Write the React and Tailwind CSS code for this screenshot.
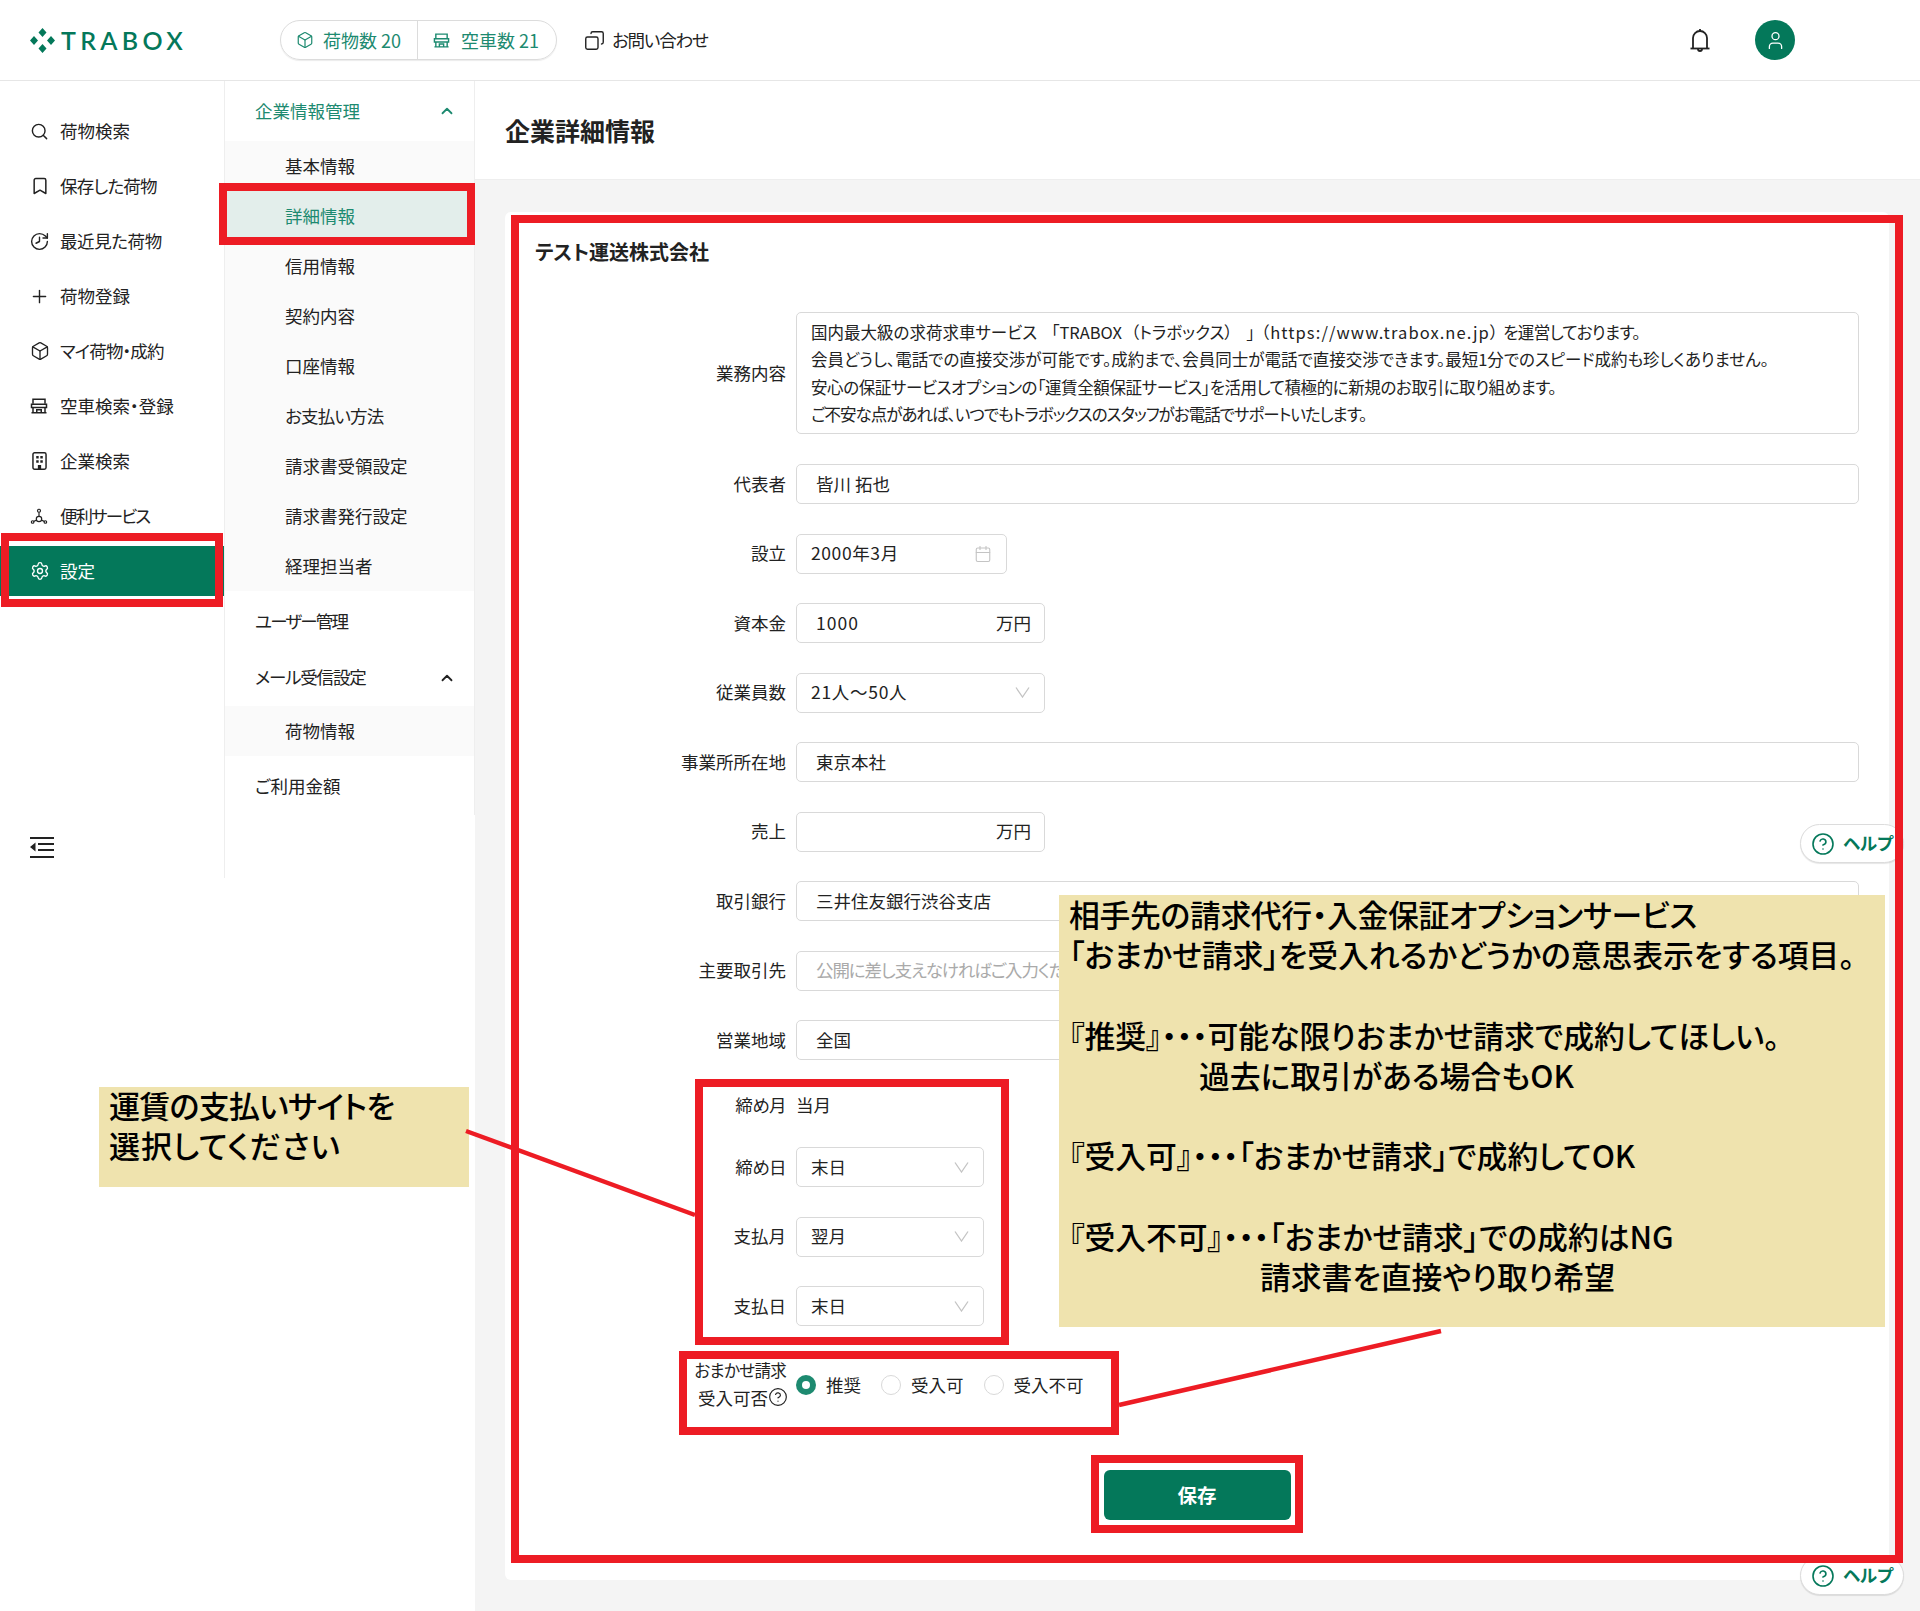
import { Bookmark, Box, Calendar, ChevronUp, CircleHelp, Copy, History, Plus, Search, Settings, User } from 'lucide-react';

const StoreIcon = ({ className }) => (
    <svg viewBox="0 0 24 24" fill="none" stroke="currentColor" strokeWidth="2" className={className}>
        <path d="M4 9V3h16v6" />
        <path d="M2 9.500h20v4.500H2z" />
        <path d="M4 14v7M20 14v7M2 21h20" />
        <path d="M9 21v-4h6v4" />
    </svg>
);

const BuildingIcon = ({ className }) => (
    <svg viewBox="0 0 18 22" fill="none" className={className}>
        <rect x="1" y="1" width="16" height="20" rx="2" stroke="currentColor" strokeWidth="1.8" />
        <path fill="currentColor" d="M5 5h3v3H5zM10 5h3v3h-3zM5 10h3v3H5zM10 10h3v3h-3zM7 16h4v5H7z" />
    </svg>
);

const NetworkIcon = ({ className }) => (
    <svg viewBox="0 0 24 24" fill="none" stroke="currentColor" strokeWidth="1.6" className={className}>
        <circle cx="12" cy="5" r="2" />
        <circle cx="3.500" cy="20" r="1.700" />
        <circle cx="20.500" cy="20" r="1.700" />
        <circle cx="12" cy="16" r="3.600" />
        <path d="M12 7v5.400M5 19.200l4-1.800M19 19.200l-4-1.800" />
    </svg>
);

const BellIcon = ({ className }) => (
    <svg viewBox="0 0 20 25" fill="none" stroke="currentColor" strokeWidth="1.8" className={className}>
        <path d="M3 20V10a7 7 0 0 1 14 0v10" />
        <path d="M0.500 20.500h19" />
        <path d="M8 21a2 2 0 0 0 4 0" />
        <path d="M10 3V1" />
    </svg>
);

const SelectArrow = () => (
    <svg viewBox="0 0 14 11" fill="none" stroke="#c4c4c4" strokeWidth="1.3" className="w-[15px] h-[11px]">
        <path d="M0.500 0.500 7 10 13.500 0.500" />
    </svg>
);

const Logo = () => (
    <div className="flex items-center gap-[6px]">
        <svg viewBox="0 0 25 25" className="w-[25px] h-[25px]" fill="#04785a">
            <path d="M12.500 0l4 4.500-4 4.500-4-4.500zM12.500 16l4 4.500-4 4.500-4-4.500zM4 8l4 4.500-4 4.500-4-4.500zM21 8l4 4.500-4 4.500-4-4.500z" />
        </svg>
        <span className="font-['Lato',sans-serif] text-[25px] leading-none font-semibold tracking-[4.300px] text-[#04785a]">TRABOX</span>
    </div>
);

const navItems = [
    { label: '荷物検索', icon: <Search className="w-[19px] h-[19px]" strokeWidth={1.8} /> },
    { label: '保存した荷物', tracking: 'tracking-[-0.8px]', icon: <Bookmark className="w-[20px] h-[20px]" strokeWidth={1.8} /> },
    { label: '最近見た荷物', tracking: 'tracking-[-0.4px]', icon: <History className="w-[21px] h-[21px] -ml-[1px] -scale-x-100" strokeWidth={1.6} /> },
    { label: '荷物登録', icon: <Plus className="w-[21px] h-[21px] -ml-[1px]" strokeWidth={1.6} /> },
    { label: 'マイ荷物・成約', tracking: 'tracking-[-0.9px]', icon: <Box className="w-[20px] h-[20px]" strokeWidth={1.6} /> },
    { label: '空車検索・登録', icon: <StoreIcon className="w-[18px] h-[18px]" /> },
    { label: '企業検索', icon: <BuildingIcon className="w-[15px] h-[18px] ml-[2px]" /> },
    { label: '便利サービス', tracking: 'tracking-[-1.9px]', icon: <NetworkIcon className="w-[18px] h-[18px]" /> },
    { label: '設定', icon: <Settings className="w-[20px] h-[20px]" strokeWidth={1.6} />, active: true },
];

const settingItems = [
    { label: '基本情報' },
    { label: '詳細情報', active: true },
    { label: '信用情報' },
    { label: '契約内容' },
    { label: '口座情報' },
    { label: 'お支払い方法', tracking: 'tracking-[-0.8px]' },
    { label: '請求書受領設定' },
    { label: '請求書発行設定' },
    { label: '経理担当者' },
];

const Header = () => (
    <header className="h-[81px] border-b border-[#e6e6e6] flex items-center pl-[30px]">
        <div className="w-[250px]">
            <Logo />
        </div>
        <div className="w-[277px] h-[40px] flex items-center border border-[#dcdcdc] rounded-full shadow-[0_1px_1px_rgba(0,0,0,0.08)] text-[#1d8a70] text-[18px]">
            <div className="w-[137px] h-full flex items-center pl-[15px] gap-[9px] border-r border-[#dcdcdc]">
                <Box className="w-[18px] h-[18px]" strokeWidth={1.6} />
                <span>荷物数 20</span>
            </div>
            <div className="flex items-center pl-[15px] gap-[11px]">
                <StoreIcon className="w-[17px] h-[17px]" />
                <span>空車数 21</span>
            </div>
        </div>
        <div className="flex items-center ml-[27px] gap-[7px]">
            <Copy className="w-[21px] h-[21px] -scale-x-100" strokeWidth={1.6} />
            <span className="tracking-[-1.2px]">お問い合わせ</span>
        </div>
        <div className="ml-auto mr-[125px] flex items-center gap-[45px]">
            <BellIcon className="w-[20px] h-[25px] text-[#222]" />
            <div className="w-[40px] h-[40px] rounded-full bg-[#04785a] flex items-center justify-center">
                <User className="w-[21px] h-[21px] text-white" strokeWidth={1.5} />
            </div>
        </div>
    </header>
);

const MainNav = () => (
    <nav className="w-[225px] h-[797px] border-r border-[#eeeeee] pt-[25px] flex flex-col">
        {navItems.map((item) => (
            <div
                key={item.label}
                className={`h-[50px] mb-[5px] flex items-center pl-[30px] ${item.active ? 'bg-[#04785a] text-white' : ''}`}
            >
                <span className="w-[30px] flex items-center">{item.icon}</span>
                <span className={item.tracking}>{item.label}</span>
            </div>
        ))}
        <svg viewBox="0 0 24 21" className="w-[24px] h-[21px] mt-auto mb-[20px] ml-[30px]" fill="#222">
            <path d="M0 0h24v2H0zM8 6h16v2H8zM8 12h16v2H8zM0 19h24v2H0zM5.500 5.500v9L0 10z" />
        </svg>
    </nav>
);

const SettingsNav = () => (
    <aside className="w-[250px] h-[734px] border-r border-[#eeeeee]">
        <div className="h-[60px] flex items-center justify-between pl-[30px] pr-[18px] text-[#1d8a70]">
            <span>企業情報管理</span>
            <ChevronUp className="w-[18px] h-[18px]" strokeWidth={2.4} />
        </div>
        <div className="bg-[#fafafa]">
            {settingItems.map((item) => (
                <div
                    key={item.label}
                    className={`h-[50px] flex items-center pl-[60px] ${item.active ? 'bg-[#e3eeeb] text-[#1d8a70]' : ''}`}
                >
                    <span className={item.tracking}>{item.label}</span>
                </div>
            ))}
        </div>
        <div className="h-[60px] flex items-center pl-[30px]">
            <span className="tracking-[-1.8px]">ユーザー管理</span>
        </div>
        <div className="h-[55px] pb-[2px] flex items-center justify-between pl-[30px] pr-[18px]">
            <span className="tracking-[-1.2px]">メール受信設定</span>
            <ChevronUp className="w-[18px] h-[18px]" strokeWidth={2.4} />
        </div>
        <div className="h-[50px] flex items-center pl-[60px] bg-[#fafafa]">荷物情報</div>
        <div className="h-[60px] flex items-center pl-[30px]">ご利用金額</div>
    </aside>
);

const Row = ({ label, labelClass, children }) => (
    <div className="flex items-center gap-[10px]">
        <div className={`w-[251px] text-right shrink-0 ${labelClass || ''}`}>{label}</div>
        {children}
    </div>
);

const Field = ({ className = '', children }) => (
    <div className={`h-[40px] border border-[#d9d9d9] rounded-[5px] flex items-center justify-between ${className}`}>
        {children}
    </div>
);

const Select = ({ value, width = 'w-[188px]', valueClass }) => (
    <Field className={`${width} pl-[14px] pr-[14px]`}>
        <span className={valueClass}>{value}</span>
        <SelectArrow />
    </Field>
);

const Radio = ({ label, checked, className }) => (
    <div className={`flex items-center gap-[10px] ${className}`}>
        {checked ? (
            <span className="w-[20px] h-[20px] rounded-full bg-[#1d8a70] flex items-center justify-center">
                <span className="w-[8px] h-[8px] rounded-full bg-white"></span>
            </span>
        ) : (
            <span className="w-[20px] h-[20px] rounded-full border border-[#d9d9d9]"></span>
        )}
        <span>{label}</span>
    </div>
);

const DetailForm = () => (
    <section className="mt-[32px] ml-[30px] mr-[31px] h-[1368px] bg-white rounded-[6px] pt-[26px] px-[30px]">
        <h2 className="text-[20px] leading-[28px] font-bold mb-[46px]">テスト運送株式会社</h2>
        <div className="flex flex-col gap-[30px]">
            <Row label="業務内容">
                <div className="flex-1 h-[122px] border border-[#d9d9d9] rounded-[5px] px-[14px] py-[6px] leading-[27.4px] text-[16.5px] whitespace-nowrap">
                    <p>
                        <span>国内最大級の求荷求車サービス</span>
                        <span className="ml-[14px]">「TRABOX</span>
                        <span className="ml-[9px]">（トラボックス）</span>
                        <span className="ml-[14px]">」</span>
                        <span className="ml-[6px] tracking-[1.1px]">（https://www.trabox.ne.jp）</span>
                        <span className="ml-[4px] tracking-[-0.6px]">を運営しております。</span>
                    </p>
                    <p>会員どうし、電話での直接交渉が可能です。成約まで、会員同士が電話で直接交渉できます。最短1分でのスピード成約も珍しくありません。</p>
                    <p className="tracking-[-0.4px]">安心の保証サービスオプションの「運賃全額保証サービス」を活用して積極的に新規のお取引に取り組めます。</p>
                    <p className="tracking-[-1px]">ご不安な点があれば、いつでもトラボックスのスタッフがお電話でサポートいたします。</p>
                </div>
            </Row>
            <div className="flex flex-col gap-[29.5px]">
                <Row label="代表者">
                    <Field className="flex-1 pl-[19px]">皆川 拓也</Field>
                </Row>
                <Row label="設立">
                    <Field className="w-[211px] pl-[14px] pr-[14px]">
                        <span className="tracking-[0.6px]">2000年3月</span>
                        <Calendar className="w-[18px] h-[18px] text-[#c4c4c4]" strokeWidth={1.5} />
                    </Field>
                </Row>
                <Row label="資本金">
                    <Field className="w-[249px] pl-[19px] pr-[13px]">
                        <span className="tracking-[1px]">1000</span>
                        <span>万円</span>
                    </Field>
                </Row>
                <Row label="従業員数">
                    <Select value="21人～50人" width="w-[249px]" valueClass="tracking-[0.7px]" />
                </Row>
                <Row label="事業所所在地">
                    <Field className="flex-1 pl-[19px]">東京本社</Field>
                </Row>
                <Row label="売上">
                    <Field className="w-[249px] pl-[19px] pr-[13px]">
                        <span></span>
                        <span>万円</span>
                    </Field>
                </Row>
                <Row label="取引銀行">
                    <Field className="flex-1 pl-[19px]">三井住友銀行渋谷支店</Field>
                </Row>
                <Row label="主要取引先">
                    <Field className="flex-1 pl-[19px] text-[#aaaaaa]">
                        <span className="tracking-[-1.100px] whitespace-nowrap">公開に差し支えなければご入力くだ</span>
                    </Field>
                </Row>
                <Row label="営業地域">
                    <Field className="flex-1 pl-[19px]">全国</Field>
                </Row>
                <div className="h-[28px] pt-[2px]">
                    <Row label="締め月" labelClass="tracking-[-0.6px]">
                        <span>当月</span>
                    </Row>
                </div>
                <Row label="締め日" labelClass="tracking-[-0.6px]">
                    <Select value="末日" />
                </Row>
                <Row label="支払月">
                    <Select value="翌月" />
                </Row>
                <Row label="支払日">
                    <Select value="末日" />
                </Row>
                <div className="flex gap-[10px] h-[54px]">
                    <div className="w-[251px] pt-[1px] text-right leading-[27px]">
                        <div className="text-[16.5px] tracking-[-0.7px]">おまかせ請求</div>
                        <div className="flex items-center justify-end">
                            受入可否
                            <CircleHelp className="w-[20px] h-[20px] -mr-[2px]" strokeWidth={1.4} />
                        </div>
                    </div>
                    <div className="flex items-start pt-[16px] h-[54px]">
                        <Radio label="推奨" checked />
                        <Radio label="受入可" className="ml-[20px]" />
                        <Radio label="受入不可" className="ml-[20px]" />
                    </div>
                </div>
            </div>
            <div className="flex justify-center mt-[30px]">
                <button className="w-[187px] h-[50px] rounded-[6px] bg-[#04785a] text-white font-bold text-[19.5px]">保存</button>
            </div>
        </div>
    </section>
);

const HelpButton = ({ className }) => (
    <div className={`absolute left-[1800px] w-[104px] h-[39px] rounded-full bg-white border border-[#dcdcdc] shadow-[0_1px_1px_rgba(0,0,0,0.1)] flex items-center pl-[10px] gap-[8px] text-[#04785a] font-bold text-[17.5px] ${className}`}>
        <CircleHelp className="w-[24px] h-[24px] shrink-0" strokeWidth={1.6} />
        <span>ヘルプ</span>
    </div>
);

// annotations drawn on top of the screenshot
const Annotations = () => (
    <>
        <HelpButton className="top-[824px]" />
        <HelpButton className="top-[1556px]" />

        <div className="absolute left-[99px] top-[1087px] w-[370px] h-[100px] bg-[#efe3ae] pl-[10px] text-[31px] leading-[40px] text-black font-medium">
            <div className="-mt-[2px]">
                <p className="tracking-[-0.7px]">運賃の支払いサイトを</p>
                <p className="tracking-[0.9px]">選択してください</p>
            </div>
        </div>

        <div className="absolute left-[1059px] top-[895px] w-[826px] h-[432px] bg-[#efe3ae] pl-[10px] text-[30.8px] leading-[40.2px] text-black font-medium whitespace-nowrap">
            <div className="-mt-[1px]">
                <p className="tracking-[-0.3px]">相手先の請求代行・入金保証オプションサービス</p>
                <p>「おまかせ請求」を受入れるかどうかの意思表示をする項目。</p>
                <p className="h-[40.2px]"></p>
                <p>『推奨』・・・可能な限りおまかせ請求で成約してほしい。</p>
                <p className="pl-[130px]">過去に取引がある場合もOK</p>
                <p className="h-[40.2px]"></p>
                <p>『受入可』・・・「おまかせ請求」で成約してOK</p>
                <p className="h-[40.2px]"></p>
                <p>『受入不可』・・・「おまかせ請求」での成約はNG</p>
                <p className="pl-[191px]">請求書を直接やり取り希望</p>
            </div>
        </div>

        <svg viewBox="0 0 1920 1611" className="absolute left-0 top-0 w-[1920px] h-[1611px] pointer-events-none" stroke="#ed1c24" strokeWidth="4.5">
            <path d="M466 1131 695 1215" />
            <path d="M1119 1405 1441 1331" />
        </svg>

        <div className="absolute left-[511px] top-[215px] w-[1392px] h-[1348px] border-[8px] border-[#ed1c24]"></div>
        <div className="absolute left-[219px] top-[183px] w-[256px] h-[62px] border-[8px] border-[#ed1c24]"></div>
        <div className="absolute left-[1px] top-[533px] w-[222px] h-[74px] border-[8px] border-[#ed1c24]"></div>
        <div className="absolute left-[695px] top-[1079px] w-[314px] h-[266px] border-[8px] border-[#ed1c24]"></div>
        <div className="absolute left-[679px] top-[1351px] w-[440px] h-[84px] border-[8px] border-[#ed1c24]"></div>
        <div className="absolute left-[1091px] top-[1455px] w-[212px] h-[78px] border-[8px] border-[#ed1c24]"></div>
    </>
);

export default function App() {
    return (
        <div className="relative w-[1920px] h-[1611px] overflow-hidden bg-white text-[#222222] text-[17.5px] font-['Noto_Sans_CJK_JP',sans-serif] [font-feature-settings:'palt']">
            <Header />
            <div className="flex h-[1530px]">
                <MainNav />
                <SettingsNav />
                <main className="flex-1 h-full bg-[#f4f4f4]">
                    <div className="h-[99px] pt-[2px] bg-white border-b border-[#eeeeee] flex items-center pl-[30px]">
                        <h1 className="text-[25px] font-bold">企業詳細情報</h1>
                    </div>
                    <DetailForm />
                </main>
            </div>
            <Annotations />
        </div>
    );
}
